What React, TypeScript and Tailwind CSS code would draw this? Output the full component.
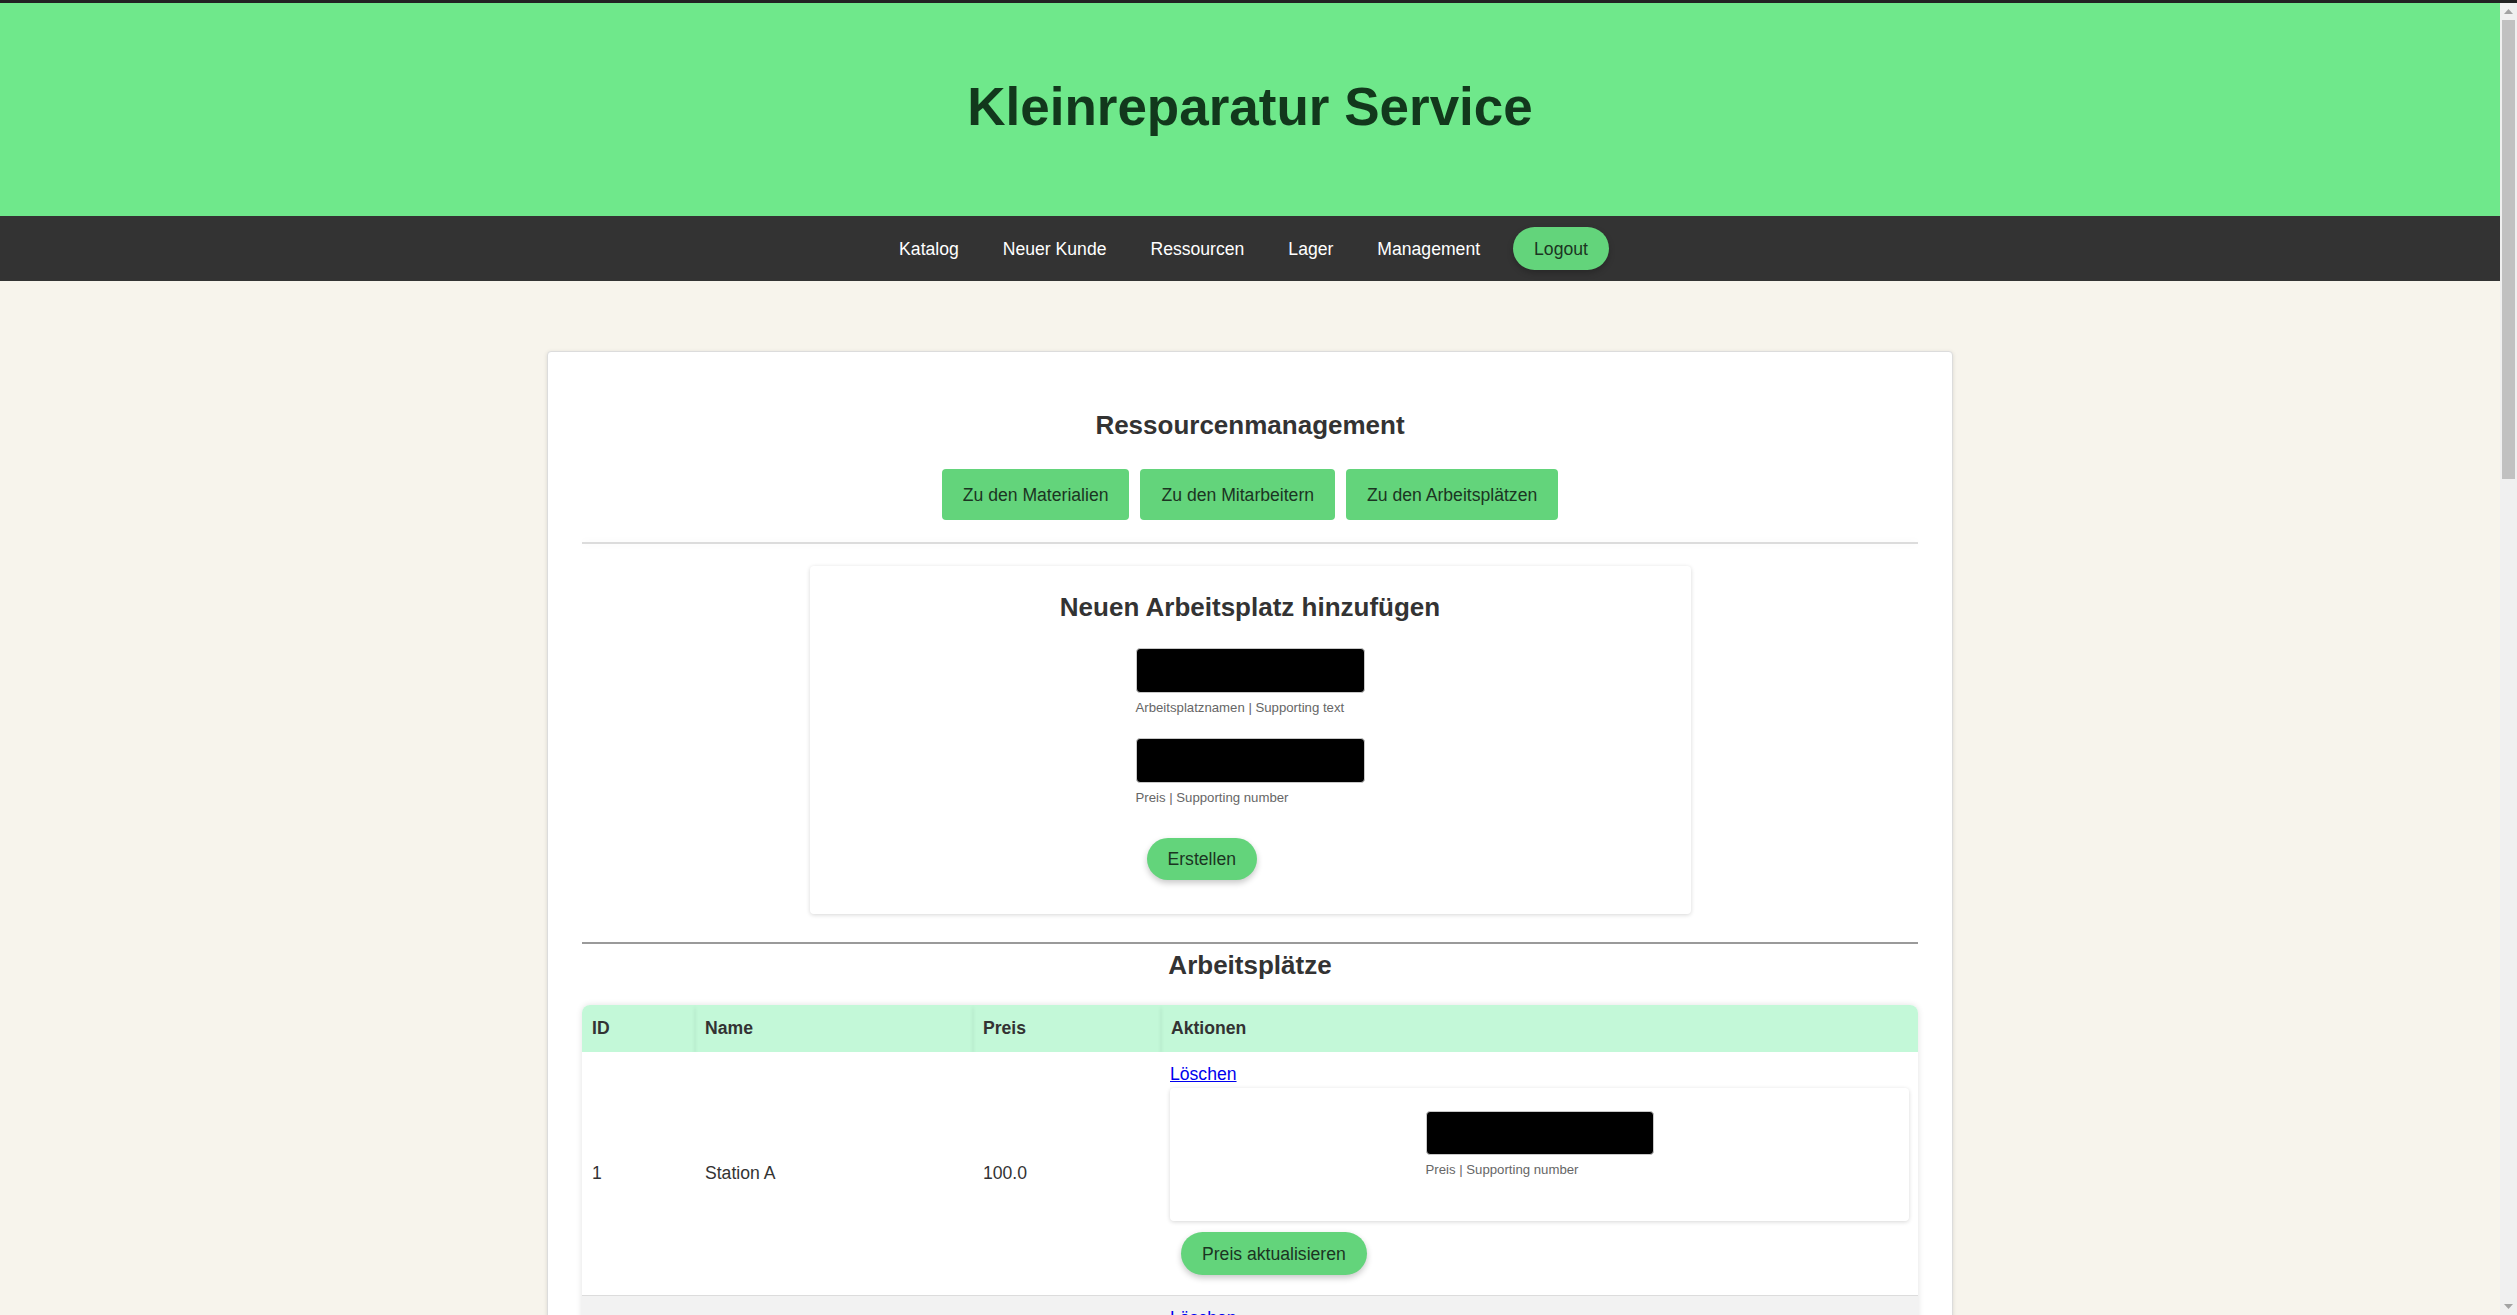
const NAV_LINKS = ["Katalog", "Neuer Kunde", "Ressourcen", "Lager", "Management"];

const RES_BUTTONS = ["Zu den Materialien", "Zu den Mitarbeitern", "Zu den Arbeitsplätzen"];

const STATIONS = [
  { id: 1, name: "Station A", price: "100.0" },
  { id: 2, name: "Station B", price: "150.0" },
];

function PillButton({ children, className = "" }: { children: React.ReactNode; className?: string }) {
  return (
    <button
      type="button"
      className={`rounded-full bg-[#63d47b] px-[21px] text-[17.6px] leading-[20px] text-[#1b3522] shadow-[0_3px_6px_rgba(0,0,0,0.22)] ${className}`}
    >
      {children}
    </button>
  );
}

function BlackInput() {
  return (
    <input
      readOnly
      className="block h-[45px] w-[229px] rounded-[4px] border border-[#c8c8c8] bg-black outline-none"
    />
  );
}

function Scrollbar() {
  return (
    <div className="flex w-[17px] shrink-0 flex-col bg-[#f0f0f0]">
      <div className="flex h-[17px] items-center justify-center">
        <svg width="9" height="5" viewBox="0 0 9 5">
          <path d="M0 5 L4.5 0 L9 5 Z" fill="#a3a3a3" />
        </svg>
      </div>
      <div className="mx-[2px] h-[459px] bg-[#c1c1c1]" />
      <div className="flex-1" />
      <div className="flex h-[17px] items-center justify-center">
        <svg width="9" height="5" viewBox="0 0 9 5">
          <path d="M0 0 L4.5 5 L9 0 Z" fill="#a3a3a3" />
        </svg>
      </div>
    </div>
  );
}

export default function App() {
  return (
    <div className="h-screen overflow-hidden bg-[#f7f4ec] font-['Liberation_Sans',Arial,sans-serif] text-[17.6px] text-[#333]">
      <div className="h-[3px] bg-[#222]" />

      <div className="flex h-[calc(100vh-3px)]">
        <div className="min-w-0 flex-1 overflow-hidden">
          {/* Header */}
          <header className="flex h-[213px] items-center justify-center bg-[#6fe88b] pb-[6px]">
            <h1 className="text-[53px] font-bold leading-[60px] text-[#12381c]">Kleinreparatur Service</h1>
          </header>

          {/* Navigation */}
          <nav className="flex h-[65px] items-center justify-center bg-[#333] pl-[8px]">
            {NAV_LINKS.map((l, i) => (
              <a
                key={l}
                href="#"
                className={`leading-[20px] text-white ${i === NAV_LINKS.length - 1 ? "mr-[33px]" : "mr-[44px]"}`}
              >
                {l}
              </a>
            ))}
            <PillButton className="h-[43px]">Logout</PillButton>
          </nav>

          <main className="flex justify-center pt-[70px] pb-20">
            <div className="w-[1406px] rounded-[4px] border border-[#dcdcdc] bg-white px-[34px] pt-[58px] pb-10 shadow-[0_1px_4px_rgba(0,0,0,0.12)]">
              <h2 className="text-center text-[26px] font-bold leading-[30px] text-[#333]">Ressourcenmanagement</h2>

              <div className="mt-[29px] flex justify-center gap-[11px]">
                {RES_BUTTONS.map((b) => (
                  <button
                    key={b}
                    type="button"
                    className="h-[51px] rounded-[4px] bg-[#63d47b] px-[21px] text-[17.6px] leading-[20px] text-[#1b3522]"
                  >
                    {b}
                  </button>
                ))}
              </div>

              <hr className="mt-[22px] h-[2px] border-0 bg-[#dcdcdc] shadow-[0_0_8px_rgba(0,0,0,0.06)]" />

              {/* New workplace form */}
              <div className="mx-auto mt-[22px] w-[881px] rounded-[4px] bg-white pt-[26px] pb-[34px] shadow-[0_1px_4px_rgba(0,0,0,0.16)]">
                <h3 className="text-center text-[26px] font-bold leading-[30px] text-[#333]">
                  Neuen Arbeitsplatz hinzufügen
                </h3>
                <div className="mx-auto mt-[26px] w-[229px]">
                  <BlackInput />
                  <p className="mt-[7px] text-[13.2px] leading-[16px] text-[#666]">
                    Arbeitsplatznamen | Supporting text
                  </p>
                  <div className="mt-[22px]">
                    <BlackInput />
                  </div>
                  <p className="mt-[7px] text-[13.2px] leading-[16px] text-[#666]">Preis | Supporting number</p>
                  <PillButton className="ml-[11px] mt-[32px] h-[42px]">Erstellen</PillButton>
                </div>
              </div>

              <hr className="mt-[28px] h-[2px] border-0 bg-[#9a9a9a]" />

              <h2 className="mt-[6px] text-center text-[26px] font-bold leading-[30px] text-[#333]">Arbeitsplätze</h2>

              {/* Table */}
              <div className="mt-[25px] overflow-hidden rounded-t-[8px] shadow-[0_0_6px_rgba(0,0,0,0.12)]">
                <table className="w-full border-collapse text-left">
                  <thead>
                    <tr className="h-[47px] bg-[#c3f8d8]">
                      <th className="w-[113px] pl-[10px] font-bold shadow-[0_3px_4px_rgba(0,0,0,0.08)]">ID</th>
                      <th className="w-[278px] pl-[10px] font-bold shadow-[0_3px_4px_rgba(0,0,0,0.08)]">Name</th>
                      <th className="w-[188px] pl-[10px] font-bold shadow-[0_3px_4px_rgba(0,0,0,0.08)]">Preis</th>
                      <th className="pl-[10px] font-bold shadow-[0_3px_4px_rgba(0,0,0,0.08)]">Aktionen</th>
                    </tr>
                  </thead>
                  <tbody>
                    {STATIONS.map((s, i) => (
                      <tr
                        key={s.id}
                        className={i % 2 === 1 ? "border-t border-[#dcdcdc] bg-[#f2f2f2]" : "bg-white"}
                      >
                        <td className="pl-[10px] align-middle">{s.id}</td>
                        <td className="pl-[10px] align-middle">{s.name}</td>
                        <td className="pl-[10px] align-middle">{s.price}</td>
                        <td className="px-[9px] pt-[12px] pb-[20px]">
                          <a href="#" className="block w-fit leading-[20px] text-[#0000ee] underline">
                            Löschen
                          </a>
                          <div className="mt-[4px] flex h-[133px] justify-center rounded-[4px] bg-white pt-[23px] shadow-[0_1px_4px_rgba(0,0,0,0.16)]">
                            <div>
                              <input
                                readOnly
                                className="block h-[44px] w-[228px] rounded-[4px] border border-[#c8c8c8] bg-black outline-none"
                              />
                              <p className="mt-[7px] text-[13.2px] leading-[16px] text-[#666]">
                                Preis | Supporting number
                              </p>
                            </div>
                          </div>
                          <PillButton className="ml-[11px] mt-[11px] h-[43px]">Preis aktualisieren</PillButton>
                        </td>
                      </tr>
                    ))}
                  </tbody>
                </table>
              </div>
            </div>
          </main>
        </div>
        <Scrollbar />
      </div>
    </div>
  );
}
